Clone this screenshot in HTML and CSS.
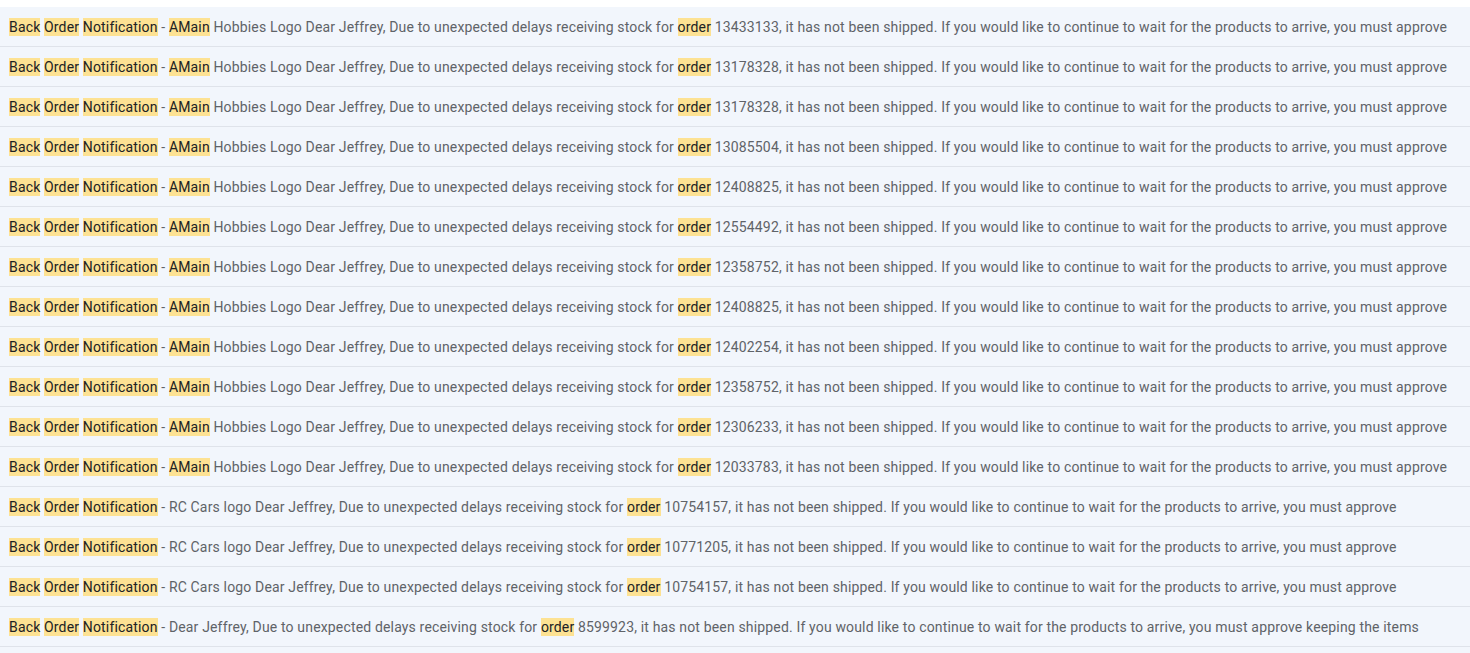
FILE: index.html
```html
<!DOCTYPE html>
<html lang="en">
<head>
  <meta charset="UTF-8">
  <meta name="viewport" content="width=device-width, initial-scale=1.0">
  <title>Search results</title>
  <link rel="stylesheet" href="styles.css">
</head>
<body>
  <div class="list" id="list"></div>

  <script>
    const amain = [
      '13433133', '13178328', '13178328', '13085504', '12408825', '12554492',
      '12358752', '12408825', '12402254', '12358752', '12306233', '12033783'
    ];
    const rcCars = ['10754157', '10771205', '10754157'];

    const subject = '<mark>Back</mark> <mark>Order</mark> <mark>Notification</mark>';
    const body = 'Dear Jeffrey, Due to unexpected delays receiving stock for <mark>order</mark> ';
    const tail = ', it has not been shipped. If you would like to continue to wait for the products to arrive, you must approve';

    const rows = [];
    amain.forEach((n) => {
      rows.push(subject + ' - <mark>AMain</mark> Hobbies Logo ' + body + n + tail);
    });
    rcCars.forEach((n) => {
      rows.push(subject + ' - RC Cars logo ' + body + n + tail);
    });
    rows.push(subject + ' - ' + body + '8599923' + tail + ' keeping the items');
    rows.push('');

    const list = document.getElementById('list');
    rows.forEach((html) => {
      const div = document.createElement('div');
      div.className = 'row';
      div.innerHTML = `<span class="snippet">${html}</span>`;
      list.appendChild(div);
    });
  </script>
</body>
</html>
```

FILE: styles.css
```css
body {
  margin: 0;
  background-color: #fff;
  font-family: Roboto, "Liberation Sans", Arial, sans-serif;
  overflow: hidden;
}
.list {
  padding-top: 7px;
  height: 646px;
  overflow: hidden;
}
.row {
  background-color: #f2f6fc;
  border-bottom: 1px solid #dfe3ea;
  height: 39px;
  display: flex;
  align-items: center;
  padding-left: 9px;
  white-space: nowrap;
  overflow: hidden;
}
.snippet {
  font-size: 14px;
  color: #5f6368;
  letter-spacing: 0.16px;
}
mark {
  background-color: #fde293;
  color: #202124;
  display: inline-block;
  line-height: 18px;
}
```
